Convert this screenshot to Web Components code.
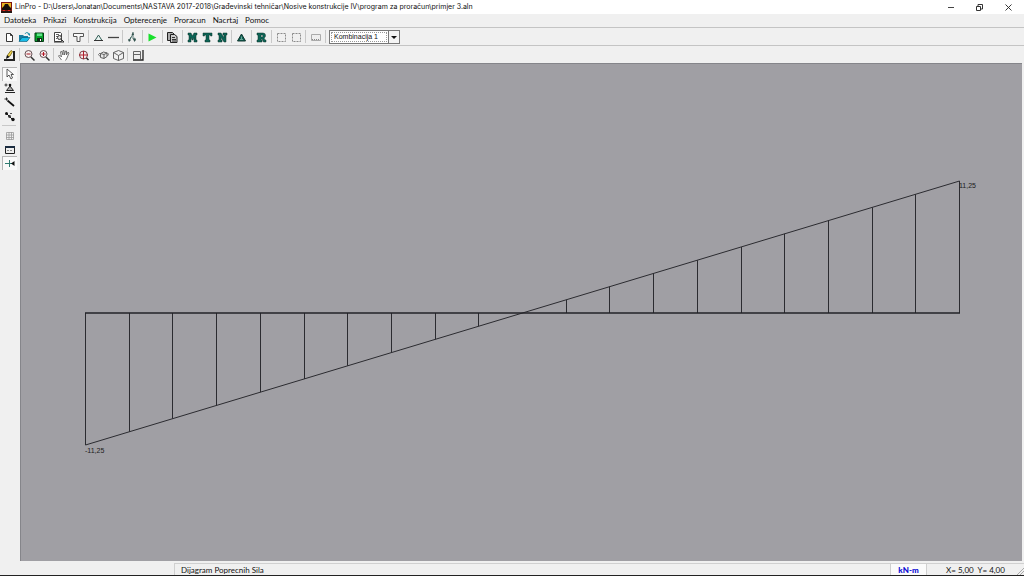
<!DOCTYPE html>
<html lang="sr-Latn">
<head>
<meta charset="utf-8">
<title>LinPro</title>
<style>
html, body { height: 100%; margin: 0; }
body { font: 8px/12px Lato, "Open Sans", sans-serif; color: #111; background: #f0f0f0; overflow: hidden; }
</style>
</head>
<body>
<lin-app></lin-app>
<script>
const define = (name, html, setup) => customElements.define(name, class extends HTMLElement {
  connectedCallback() {
    if (this.shadowRoot) return;
    const root = this.attachShadow({ mode: "open" });
    root.innerHTML = html;
    if (setup) setup(this, root);
  }
});

/* Glyphs on a 15 x 14 grid */
const bold = d => `<path fill-rule="evenodd" d="${d}" fill="#0c6456" stroke="#12362f" stroke-width=".5"/>`;
const ICONS = {
  new: '<path d="M4.500 3.500h4l2 2v6h-6zM8.500 3.500v2h2" fill="#fff" stroke="#222" stroke-width=".9"/>',
  open: '<path d="M2 11V5h4l1 1h4v5z" fill="#187ca0"/><path d="M2 11.500l3-4h8l-3 4z" fill="#19bce8" stroke="#075572" stroke-width=".6"/><path d="M8 4c1-2 3-2 4 0" stroke="#168aa5" fill="none"/><path d="M10 3.500h3V6z" fill="#168aa5"/>',
  save: '<path d="M3 3h8.500v8.500H3z" fill="#06a52a" stroke="#063b16"/><path d="M5 3.500h5V6H5z" fill="#62e08a"/><path d="M5 8h5v3.500H5z" fill="#102c18"/><path d="M8 9h1v2H8z" fill="#fff"/>',
  preview: '<path d="M3.500 2.500h6l1 1v8h-7z" fill="#fff" stroke="#444"/><path d="M5 4.500h3M5 6.500h2M5 8.500h1" stroke="#666"/><circle cx="8.500" cy="7.500" r="2" fill="#ddd" stroke="#333"/><path d="M10 9l3 3M3 12h10" stroke="#333"/>',
  section: '<path d="M2.500 3.500h10v3h-3.500v5h-3v-5H2.500z" fill="#fafafa" stroke="#555"/>',
  support: '<path d="M7.500 5L11 10.500H4z" fill="#e8f2ef" stroke="#315c55"/><path d="M3 10.500h9" stroke="#333"/>',
  beam: '<path d="M2 7.500h11" stroke="#444" stroke-width="1.300"/>',
  force: '<path d="M8 2v7M8 4L4 11M6 7l-2 4M8 9l2-1v3" stroke="#335c55" stroke-width=".8" fill="none"/><path d="M6.500 5L8 2l1 3zM3 9l1 3 2-2zM8 9l1.500 3 1.500-3z" fill="#35534f"/>',
  run: '<path d="M3.500 3.500v8l8-4z" fill="#18e02c"/>',
  copy: '<path d="M2.500 2.500h5l2 2v6h-7z" fill="#aaa" stroke="#222"/><path d="M5.500 4.500h4l2.500 2v6H5.500z" fill="#ccc" stroke="#222"/><path d="M7 7.500h3M7 9.500h4M7 11h4" stroke="#333"/>',
  M: bold("M3 3h3l1.500 3L9 3h3v2h-1v5h1v2H9V7.500L8 10H7L6 7.500V12H3v-2h1V5H3z"),
  T: bold("M3 3h9v3h-1.500V5H9v5h1v2H5v-2h1V5H4.500v1H3z"),
  N: bold("M3 3h3l3 4.500V5H8V3h4v2h-1v7H9L6 7.500V10h1v2H3v-2h1V5H3z"),
  R: bold("M3 3h6q2.500 0 2.500 2.500Q11.500 7.500 10 8l1 2h1v2h-2.500L8 9H7v1h1v2H3v-2h1V5H3zM7 5v2h1q1 0 1-1T8 5z"),
  delta: '<path d="M7.500 4L11.500 11h-8z" fill="#0c6456" stroke="#12362f"/><path d="M7.500 6.500v2.500M6 9.500h3" stroke="#85b5aa" stroke-width=".8"/>',
  area: '<path d="M3.500 3.500h8v8h-8z" fill="none" stroke="#8b8b8b" stroke-dasharray="2 1"/>',
  panel: '<path d="M3.500 4.500h9v6h-9z" fill="#eee" stroke="#aaa"/><path d="M4 9.500h8" stroke="#888" stroke-dasharray="1 1"/>',
  pencil: '<path d="M2 12h10V3" stroke="#222" stroke-width="2" fill="none"/><path d="M5 9.500l1-3L9 2.500l1.500 1-2.500 4.500z" fill="#f4d64a" stroke="#6a5a10" stroke-width=".8"/><path d="M4 11l1-4 2.500 2z" fill="#111"/>',
  minus: '<circle cx="6.500" cy="6" r="3.500" fill="#f4eeee" stroke="#594044" stroke-width=".9"/><path d="M4.500 6h4" stroke="#a31421"/><path d="M9 9l3.500 3.500" stroke="#333" stroke-width="1.500"/>',
  plus: '<circle cx="6.500" cy="6" r="3.500" fill="#f4eeee" stroke="#594044" stroke-width=".9"/><path d="M4.500 6h4M6.500 4v4" stroke="#b41424"/><path d="M9 9l3.500 3.500" stroke="#333" stroke-width="1.500"/>',
  hand: '<path d="M5.500 12L2.500 8l1-1 2 2-1-5 1-1 1.500 4V2.500h1L8.500 7l1-4h1v4l1.500-3 1 1L11 10l-1.500 2.500" fill="#fff" stroke="#555" stroke-width=".8"/>',
  fit: '<circle cx="7.500" cy="7" r="4" fill="#f4eaea" stroke="#754047"/><path d="M3 7h9M7.500 3v8" stroke="#b0202d"/><path d="M10.500 10l2 2" stroke="#222" stroke-width="1.500"/>',
  turn: '<path d="M4.500 5.500l3-1.500 3.500 1v3.500l-3 2-3.500-1zM4.500 5.500l3.500 1 3-1.500M8 6.500v4" fill="#e8e8e8" stroke="#555" stroke-width=".9"/><path d="M4 5L2.500 6.500 4 8.500M11 4.500l1.500 1.500-1 2" stroke="#555" stroke-width=".8" fill="none"/>',
  cube: '<path d="M2.500 4.500l5-2 5 2v6l-5 2-5-2zM2.500 4.500l5 3 5-3M7.500 7.500v5" fill="#f1f1f1" stroke="#555" stroke-width=".9"/>',
  frame: '<path d="M3.500 11V3.500h7V11M3.500 6.500h7" fill="#eee" stroke="#666"/><path d="M3 12h10V2" stroke="#222" stroke-width="1.300" fill="none"/>',
  arrow: '<path d="M5 2v8l2-2 2 4 1.500-1L9 7.500h2.500z" fill="#fff" stroke="#333" stroke-width=".8"/>',
  node: '<path d="M8 5L4.500 9.500h7z" fill="#aaa" stroke="#222"/><path d="M3 11.500h10" stroke="#222"/><path d="M2.500 4h3M4 2.500v3" stroke="#333"/><circle cx="8" cy="4" r="1.300" fill="#111"/>',
  addline: '<path d="M5.500 5.500l6.500 5.500" stroke="#111" stroke-width="1.700"/><path d="M2.500 4h3.500M4.500 2.500v3" stroke="#222"/>',
  hinge: '<path d="M4 4l7 7" stroke="#111"/><circle cx="4.500" cy="4.500" r="1.500" fill="#111"/><circle cx="7.500" cy="7.500" r="1.400" fill="#333"/><circle cx="11" cy="10.500" r="1.700" fill="#111"/><path d="M8 4.500h2" stroke="#555"/>',
  grid: '<path d="M4.500 4.500h7v7h-7zM7 4v8M4 7h8M9.500 4v8M4 9.500h8" stroke="#9a9a9a" stroke-width=".8" fill="none"/>',
  window: '<path d="M3.500 4.500h9v7h-9z" fill="#eee" stroke="#222"/><path d="M3 5h10" stroke="#1b2c40" stroke-width="2"/><path d="M5 8.500h6" stroke="#888" stroke-dasharray="2 1"/>',
  snap: '<path d="M3 7.500h8M7.500 4v7" stroke="#2f7a70"/><path d="M12.500 5v5L9 7.500z" fill="#111"/>'
};

define("lin-separator", `<style>
:host { display: block; flex: none; width: 5px; height: 13px; }
:host::before { content: ""; display: block; width: 1px; height: 100%; margin-left: 2px; background: #c8c8c8; }
:host([flat]) { width: 14px; height: 5px; }
:host([flat])::before { width: 100%; height: 1px; margin: 2px 0; }
</style>`);

define("lin-tool", `<style>
:host { display: block; flex: none; }
button { display: block; box-sizing: border-box; width: 15px; height: 14px; padding: 0; border: 0; background: none; }
:host([pressed]) button { background: #f9f9f9; box-shadow: inset 1px 1px #b5b5b5; }
svg { display: block; width: 15px; height: 14px; }
</style><button type="button"><svg viewBox="0 0 15 14" fill="none" aria-hidden="true"></svg></button>`, (el, root) => {
  root.querySelector("svg").innerHTML = ICONS[el.getAttribute("icon")];
  root.querySelector("button").setAttribute("aria-label", el.getAttribute("icon"));
});

define("lin-toolbar", `<style>
:host { display: flex; align-items: center; box-sizing: border-box; height: 18px; padding: 0 2px; border-top: 1px solid #c4c4c4; }
.group { display: flex; }
.group.many { margin-right: -1px; }
::slotted(*) { margin-left: 1px; }
</style><slot></slot>`, (el, root) => {
  const slot = root.querySelector("slot");
  el.getAttribute("tools").split("|").forEach((names, i, all) => {
    const group = document.createElement("div");
    const list = names.split(" ");
    group.className = list.length > 1 ? "group many" : "group";
    group.innerHTML = list.map(n => `<lin-tool icon="${n}"></lin-tool>`).join("");
    slot.before(group);
    if (i < all.length - 1 || el.children.length) slot.before(document.createElement("lin-separator"));
  });
});

define("lin-combo", `<style>
:host { display: block; position: relative; width: 71px; height: 14px; }
select { appearance: none; display: block; box-sizing: border-box; width: 100%; height: 14px; margin: 0; padding: 0 12px 0 4px; border: 1px solid #777; border-radius: 0; background: #fff; color: #111; font: 7px/12px "Liberation Sans", sans-serif; }
b { position: absolute; inset: 2px 13px 2px 2px; border: 1px dotted #999; pointer-events: none; }
i { position: absolute; top: 1px; right: 1px; width: 10px; height: 12px; border-left: 1px solid #777; background: #f4f4f4; pointer-events: none; }
i::after { content: ""; position: absolute; top: 5px; left: 2px; border: 3px solid transparent; border-top-color: #111; border-bottom: 0; }
</style><select aria-label="Kombinacija"><option>Kombinacija 1</option></select><b></b><i></i>`);

define("lin-titlebar", `<style>
:host { display: flex; align-items: center; height: 14px; background: #fff; color: #111; }
.logo { width: 11px; height: 11px; margin: 0 3px 0 1px; }
h1 { margin: 0; flex: 1; font: 7px/12px Inter, "Noto Sans", sans-serif; white-space: nowrap; }
button { width: 29px; height: 14px; padding: 0; border: 0; background: none; }
button svg { display: block; width: 9px; height: 9px; margin: auto; }
</style>
<svg class="logo" viewBox="0 0 11 11"><path d="M0 0h11v11H0z" fill="#7d160f"/><path d="M1 1h9v6H1z" fill="#e8b423"/><path d="M1 8V6l2-2 1-2h3l1 2 2 2v2z" fill="#16110e"/><path d="M0 9h11v2H0z" fill="#251714"/><path d="M2 8h2v1H2zM7 8h2v1H7z" fill="#e62a1f"/></svg>
<h1>LinPro - D:\\Users\\Jonatan\\Documents\\NASTAVA 2017-2018\\Građevinski tehničar\\Nosive konstrukcije IV\\program za proračun\\primjer 3.aln</h1>
<button aria-label="Minimize"><svg viewBox="0 0 9 9"><path d="M1 4.500h6" stroke="#444"/></svg></button>
<button aria-label="Restore"><svg viewBox="0 0 9 9"><path d="M0.500 3.500h4v4h-4zM2 3V1.500H6.500V6H5" fill="none" stroke="#333"/></svg></button>
<button aria-label="Close"><svg viewBox="0 0 9 9"><path d="M0.500 1.500l6 6M6.500 1.500l-6 6" stroke="#222" stroke-width=".9"/></svg></button>`);

define("lin-menubar", `<style>
:host { display: block; height: 13px; }
nav { display: flex; gap: 7px; padding-left: 4px; }
a { color: inherit; text-decoration: none; }
</style><nav>${["Datoteka", "Prikazi", "Konstrukcija", "Opterecenje", "Proracun", "Nacrtaj", "Pomoc"].map(t => `<a href="#">${t}</a>`).join("")}</nav>`);

define("lin-sidebar", `<style>
:host { display: flex; flex-direction: column; align-items: flex-start; box-sizing: border-box; width: 20px; padding: 4px 0 0 2px; }
</style>
<lin-tool icon="arrow" pressed></lin-tool><lin-tool icon="node"></lin-tool><lin-tool icon="addline"></lin-tool><lin-tool icon="hinge"></lin-tool>
<lin-separator flat></lin-separator>
<lin-tool icon="grid"></lin-tool><lin-tool icon="window"></lin-tool><lin-tool icon="snap" pressed></lin-tool>`);

/* Shear force diagram of a simply supported beam, cut into equal segments */
define("lin-diagram", `<style>
:host { display: block; min-width: 0; min-height: 0; overflow: hidden; background: #a09fa4; box-shadow: inset 1px 1px #85858a; }
svg { display: block; width: 100%; height: 100%; }
text { font: 7px "Liberation Sans", sans-serif; fill: #1c1c20; }
</style><svg viewBox="0 0 1002 497" role="img" aria-label="Dijagram Poprecnih Sila"></svg>`, (el, root) => {
  const left = 65.5, right = 939.5, base = 249.5, height = 132, parts = 20;
  let ribs = "";
  for (let i = 0; i <= parts; i++) {
    const x = Math.floor(left + (right - left) * i / parts) + 0.5;
    ribs += `M${x} ${base}V${base + height * (1 - 2 * i / parts)}`;
  }
  root.querySelector("svg").innerHTML =
    `<path d="${ribs}" stroke="#2b2b30" fill="none"/>
     <path d="M${left} ${base + height}L${right} ${base - height}" stroke="#2b2b30"/>
     <path d="M${left - 0.5} ${base}H${right + 0.5}" stroke="#222227" stroke-width="1.6"/>
     <text x="65" y="389">-11,25</text><text x="939" y="124">11,25</text>`;
});

define("lin-statusbar", `<style>
:host { display: flex; box-sizing: border-box; height: 15px; padding-top: 2px; border-bottom: 1px solid #222; }
div { box-sizing: border-box; border: 1px solid #d0d0d0; border-width: 1px 0 0 1px; white-space: nowrap; }
.hint { flex: 1; margin-left: 174px; padding-left: 6px; }
.unit { width: 36px; background: #fbfbfb; color: #0c0cd4; font-weight: 900; text-align: center; }
.pos { width: 98px; text-align: center; white-space: pre; }
svg { width: 8px; height: 8px; position: absolute; right: 0; bottom: 1px; }
</style><div class="hint">Dijagram Poprecnih Sila</div><div class="unit">kN-m</div><div class="pos">X= 5,00  Y= 4,00</div>
<svg viewBox="0 0 8 8"><path d="M1 8l7-7M4 8l4-4" stroke="#aaa"/></svg>`);

define("lin-app", `<style>
:host { display: flex; flex-direction: column; height: 100vh; background: #f0f0f0; }
main { display: flex; flex: 1; min-height: 0; padding-right: 2px; }
lin-diagram { flex: 1; }
</style>
<lin-titlebar></lin-titlebar>
<lin-menubar></lin-menubar>
<lin-toolbar tools="new open save|preview|section|support beam|force|run|copy|M T N|delta|R|area area|panel"><lin-combo></lin-combo></lin-toolbar>
<lin-toolbar tools="pencil|minus plus|hand|fit|turn cube|frame"></lin-toolbar>
<main><lin-sidebar></lin-sidebar><lin-diagram></lin-diagram></main>
<lin-statusbar></lin-statusbar>`);
</script>
</body>
</html>
